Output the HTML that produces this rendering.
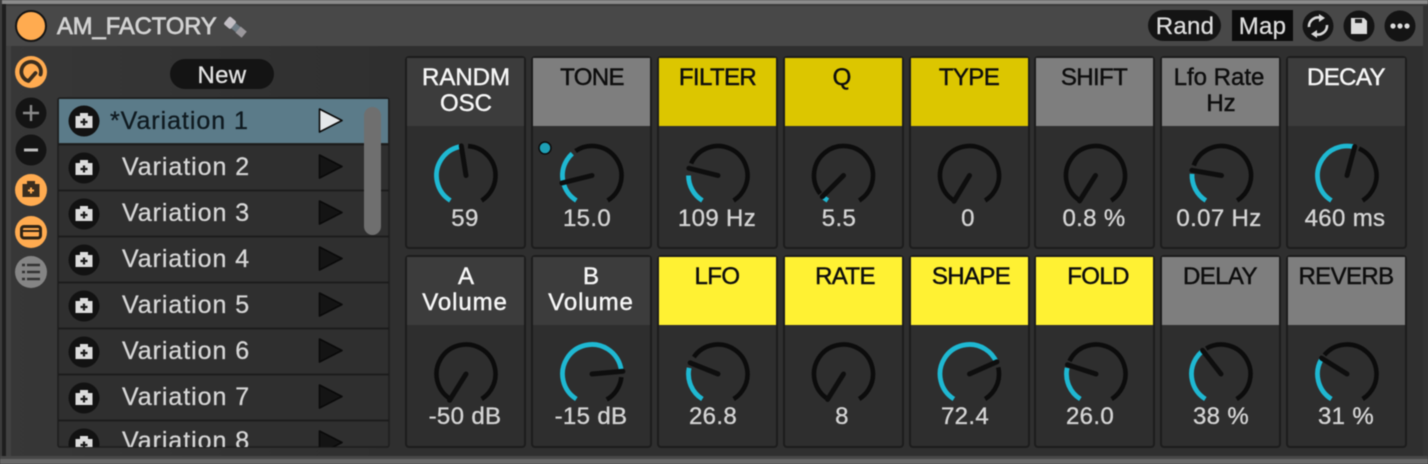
<!DOCTYPE html>
<html><head><meta charset="utf-8"><style>
html,body{margin:0;padding:0;width:1428px;height:464px;overflow:hidden;background:#3a3a3a}
svg{display:block;filter:blur(.45px)}
text{font-family:"Liberation Sans",sans-serif}
.l{font-size:24px;text-anchor:middle;stroke-width:.45px}
.w{fill:#f6f6f6;stroke:#f6f6f6}
.k{fill:#0e0e0e;stroke:#0e0e0e}
.t{letter-spacing:-.6px}
.m{letter-spacing:.9px}
.v{font-size:24px;text-anchor:middle;fill:#d4d4d4;stroke:#d4d4d4;stroke-width:.35px;letter-spacing:.35px}
.r{font-size:25px;fill:#d6d6d6;stroke:#d6d6d6;stroke-width:.3px;letter-spacing:.95px}
.bg{fill:none;stroke:#0c0c0c;stroke-width:4.600}
.c{fill:none;stroke:#1fb8d2;stroke-width:4.800}
.n{stroke:#0e0e0e;stroke-width:5;stroke-linecap:round}
</style></head><body>
<svg width="1428" height="464" viewBox="0 0 1428 464" xmlns="http://www.w3.org/2000/svg">
<defs>
<g id="cam"><circle r="15.500" fill="#121212"/><path d="M-8.500-5H-4V-8H4V-5H8.500V7H-8.500Z" fill="#dcdcdc"/><path d="M-3.500 1H3.500M0-2.500V4.500" stroke="#1a1a1a" stroke-width="2.200"/></g>
<clipPath id="lc"><rect x="58" y="98" width="332" height="349"/></clipPath>
<linearGradient id="bd" x1="0" x2="1" y1="0" y2="0"><stop offset="0" stop-color="#373737"/><stop offset=".28" stop-color="#2f2f2f"/><stop offset="1" stop-color="#2f2f2f"/></linearGradient>
</defs>
<rect width="1428" height="464" fill="#484848"/>
<rect width="1428" height="4" fill="#8b8b8b"/>
<rect y="4" width="1428" height="2" fill="#3a3a3a"/>
<rect x="0" y="0" width="2" height="464" fill="#3c3c3c"/>
<rect x="2" y="4" width="4" height="456" fill="#1e1e1e"/>
<rect x="1423" y="6" width="5" height="452" fill="#333"/>
<rect x="6" y="6" width="1417" height="40" fill="#484848"/>
<rect x="6" y="46" width="5" height="410" fill="#414141"/>
<rect x="11" y="46" width="1412" height="411" fill="url(#bd)"/>
<rect x="0" y="456" width="1428" height="3" fill="#474747"/>
<rect x="0" y="459" width="1428" height="5" fill="#686868"/>

<circle cx="31" cy="26" r="15" fill="#ffab50" stroke="#141414" stroke-width="2"/>
<text x="57" y="34" font-size="23.700px" fill="#d2d2d2" stroke="#d2d2d2" stroke-width=".75">AM_FACTORY</text>
<g transform="translate(235,27) rotate(40)"><rect x="-11" y="-5" width="9" height="10" rx="2" fill="#c2bec4"/><rect x="-2" y="-3.500" width="6" height="7" fill="#6f7c85"/><rect x="4" y="-4" width="8" height="8" fill="#9a979b"/></g>

<rect x="1148" y="10" width="73" height="31" rx="15.500" fill="#141414"/>
<text x="1185" y="34" font-size="24px" text-anchor="middle" fill="#dcdcdc" stroke="#dcdcdc" stroke-width=".3" letter-spacing=".3">Rand</text>
<rect x="1232" y="10" width="61" height="31" fill="#0c0c0c"/>
<text x="1262.500" y="34" font-size="24px" text-anchor="middle" fill="#dcdcdc" stroke="#dcdcdc" stroke-width=".3" letter-spacing=".3">Map</text>
<circle cx="1318" cy="26" r="15.500" fill="#141414"/>
<path d="M1309 27A9 9 0 0 1 1321 18M1327 25A9 9 0 0 1 1315 34" fill="none" stroke="#d8d8d8" stroke-width="2.600"/>
<path d="M1319 14L1325 18L1319 22ZM1317 30L1311 34L1317 38Z" fill="#d8d8d8"/>
<circle cx="1359" cy="26" r="15.500" fill="#141414"/>
<path d="M1351 18H1364L1367 21V34H1351Z" fill="#dcdcdc"/><rect x="1355" y="19" width="7" height="4" fill="#222"/>
<circle cx="1400" cy="26" r="15.500" fill="#141414"/>
<circle cx="1393" cy="26" r="2.600" fill="#dcdcdc"/><circle cx="1400" cy="26" r="2.600" fill="#dcdcdc"/><circle cx="1407" cy="26" r="2.600" fill="#dcdcdc"/>

<circle cx="31" cy="72" r="16" fill="#ffab50"/>
<path d="M40.500 74.500A9.800 9.800 0 1 0 28.500 81L35.500 73" fill="none" stroke="#3a2d1e" stroke-width="3.800" stroke-linecap="round" stroke-linejoin="round"/>
<circle cx="31" cy="113" r="15.500" fill="#141414"/><path d="M23 113H39M31 105V121" stroke="#8a8a8a" stroke-width="2.400"/>
<circle cx="31" cy="150" r="15.500" fill="#141414"/><path d="M24 150H38" stroke="#bdbdbd" stroke-width="3"/>
<circle cx="31" cy="190" r="16" fill="#ffab50"/><path d="M22.500 184H27V181H35V184H39.500V197H22.500Z" fill="#3a2d1e"/><path d="M28 190.500H34M31 187.500V193.500" stroke="#ffab50" stroke-width="2"/>
<circle cx="31" cy="232" r="16" fill="#ffab50"/><rect x="21.500" y="226.500" width="19" height="11.500" rx="2.500" fill="none" stroke="#2e2416" stroke-width="3"/><path d="M22 231H40" stroke="#2e2416" stroke-width="2"/>
<circle cx="31" cy="272" r="16" fill="#858585"/><path d="M27 265H40M27 272H40M27 279H40" stroke="#333" stroke-width="2.400"/><path d="M22 265H25M22 272H25M22 279H25" stroke="#333" stroke-width="2.400"/>

<rect x="170" y="59" width="104" height="30" rx="15" fill="#141414"/>
<text x="222" y="83" font-size="24px" text-anchor="middle" fill="#e2e2e2" stroke="#e2e2e2" stroke-width=".3" letter-spacing=".3">New</text>

<rect x="58" y="98" width="331" height="349" rx="2" fill="#2f2f2f" stroke="#1d1d1d" stroke-width="1.500"/>
<g clip-path="url(#lc)">
<rect x="59" y="99" width="329" height="44" fill="#5b7b89"/>
<path d="M58 144.500H389M58 190.500H389M58 236.500H389M58 282.500H389M58 328.500H389M58 374.500H389M58 420.500H389" stroke="#1c1c1c" stroke-width="2"/>
<use href="#cam" x="84" y="121"/><use href="#cam" x="84" y="168"/><use href="#cam" x="84" y="214"/><use href="#cam" x="84" y="260"/><use href="#cam" x="84" y="306"/><use href="#cam" x="84" y="352"/><use href="#cam" x="84" y="398"/><use href="#cam" x="84" y="444"/>
<text x="110" y="129" font-size="25px" fill="#0f1a20" stroke="#0f1a20" stroke-width=".3" letter-spacing=".95">*Variation 1</text>
<text x="122" y="175" class="r">Variation 2</text>
<text x="122" y="221" class="r">Variation 3</text>
<text x="122" y="267" class="r">Variation 4</text>
<text x="122" y="313" class="r">Variation 5</text>
<text x="122" y="359" class="r">Variation 6</text>
<text x="122" y="405" class="r">Variation 7</text>
<text x="122" y="449" class="r">Variation 8</text>
<path d="M319.500 109L342 120.500L319.500 132Z" fill="#e4e7e9" stroke="#0a0a0a" stroke-width="1.600" stroke-linejoin="round"/>
<g fill="#141414" stroke="#0a0a0a" stroke-width="1.600" stroke-linejoin="round"><path d="M319.500 155L342 166.500L319.500 178Z"/><path d="M319.500 201L342 212.500L319.500 224Z"/><path d="M319.500 247L342 258.500L319.500 270Z"/><path d="M319.500 293L342 304.500L319.500 316Z"/><path d="M319.500 339L342 350.500L319.500 362Z"/><path d="M319.500 385L342 396.500L319.500 408Z"/><path d="M319.500 431L342 442.500L319.500 454Z"/></g>
<rect x="364" y="107" width="17" height="128" rx="8.500" fill="#6f6f6f"/>
</g>

<g stroke="#1c1c1c" stroke-width="2" fill="#2e2e2e">
<rect x="406" y="57" width="119" height="191" rx="3"/><rect x="532" y="57" width="119" height="191" rx="3"/><rect x="658" y="57" width="119" height="191" rx="3"/><rect x="784" y="57" width="119" height="191" rx="3"/><rect x="910" y="57" width="119" height="191" rx="3"/><rect x="1035" y="57" width="119" height="191" rx="3"/><rect x="1161" y="57" width="119" height="191" rx="3"/><rect x="1287" y="57" width="119" height="191" rx="3"/>
<rect x="406" y="256" width="119" height="191" rx="3"/><rect x="532" y="256" width="119" height="191" rx="3"/><rect x="658" y="256" width="119" height="191" rx="3"/><rect x="784" y="256" width="119" height="191" rx="3"/><rect x="910" y="256" width="119" height="191" rx="3"/><rect x="1035" y="256" width="119" height="191" rx="3"/><rect x="1161" y="256" width="119" height="191" rx="3"/><rect x="1287" y="256" width="119" height="191" rx="3"/>
</g>
<rect x="407" y="58" width="117" height="68" fill="#3c3c3c"/><rect x="533" y="58" width="117" height="68" fill="#7e7e7e"/><rect x="659" y="58" width="117" height="68" fill="#dcc600"/><rect x="785" y="58" width="117" height="68" fill="#dcc600"/><rect x="911" y="58" width="117" height="68" fill="#dcc600"/><rect x="1036" y="58" width="117" height="68" fill="#7e7e7e"/><rect x="1162" y="58" width="117" height="68" fill="#7e7e7e"/><rect x="1288" y="58" width="117" height="68" fill="#3c3c3c"/>
<rect x="407" y="257" width="117" height="68" fill="#3c3c3c"/><rect x="533" y="257" width="117" height="68" fill="#3c3c3c"/><rect x="659" y="257" width="117" height="68" fill="#fff133"/><rect x="785" y="257" width="117" height="68" fill="#fff133"/><rect x="911" y="257" width="117" height="68" fill="#fff133"/><rect x="1036" y="257" width="117" height="68" fill="#fff133"/><rect x="1162" y="257" width="117" height="68" fill="#7e7e7e"/><rect x="1288" y="257" width="117" height="68" fill="#7e7e7e"/>

<text class="l w" x="466" y="85">RANDM</text><text class="l w" x="466" y="111">OSC</text>
<text class="l k t" x="592" y="85">TONE</text><text class="l k t" x="717.500" y="85">FILTER</text><text class="l k" x="842" y="85">Q</text><text class="l k t" x="969" y="85">TYPE</text><text class="l k t" x="1094" y="85">SHIFT</text>
<text class="l k" x="1219" y="85">Lfo Rate</text><text class="l k" x="1221" y="111">Hz</text><text class="l w t" x="1346" y="85">DECAY</text>
<text class="l w" x="466" y="284">A</text><text class="l w m" x="465" y="310">Volume</text><text class="l w" x="591" y="284">B</text><text class="l w m" x="591" y="310">Volume</text>
<text class="l k t" x="717" y="284">LFO</text><text class="l k t" x="845" y="284">RATE</text><text class="l k t" x="971" y="284">SHAPE</text><text class="l k t" x="1098" y="284">FOLD</text><text class="l k t" x="1220" y="284">DELAY</text><text class="l k t" x="1346" y="284">REVERB</text>

<text class="v" x="465" y="226">59</text><text class="v" x="587" y="226">15.0</text><text class="v" x="717" y="226">109 Hz</text><text class="v" x="839" y="226">5.5</text><text class="v" x="968" y="226">0</text><text class="v" x="1094" y="226">0.8 %</text><text class="v" x="1219" y="226">0.07 Hz</text><text class="v" x="1345" y="226">460 ms</text>
<text class="v" x="465" y="424">-50 dB</text><text class="v" x="591" y="424">-15 dB</text><text class="v" x="713" y="424">26.8</text><text class="v" x="842" y="424">8</text><text class="v" x="965" y="424">72.4</text><text class="v" x="1090" y="424">26.0</text><text class="v" x="1221" y="424">38 %</text><text class="v" x="1346" y="424">31 %</text>

<circle cx="545" cy="148" r="6" fill="#1e9fb5" stroke="#0c0c0c" stroke-width="1.500"/>

<g transform="translate(466,175.500)"><circle r="29.500" class="bg" pathLength="360" stroke-dasharray="144 360" transform="rotate(-86)"/><circle r="29.500" class="c" pathLength="360" stroke-dasharray="135 360" transform="rotate(-238)"/><line y2="-30" class="n" transform="rotate(-9)"/></g>
<g transform="translate(592,175.500)"><circle r="29.500" class="bg" pathLength="360" stroke-dasharray="182 360" transform="rotate(-124)"/><circle r="29.500" class="c" pathLength="360" stroke-dasharray="106 360" transform="rotate(-238)"/><line y2="-31" class="n" transform="rotate(-104)"/></g>
<g transform="translate(718,175.500)"><circle r="29.500" class="bg" pathLength="360" stroke-dasharray="214 360" transform="rotate(-156)"/><circle r="29.500" class="c" pathLength="360" stroke-dasharray="58 360" transform="rotate(-238)"/><line y2="-30" class="n" transform="rotate(-76)"/></g>
<g transform="translate(843.500,175.500)"><circle r="29.500" class="bg" pathLength="360" stroke-dasharray="276 360" transform="rotate(-218)"/><circle r="29.500" class="c" pathLength="360" stroke-dasharray="12 360" transform="rotate(-238)"/><line y2="-30" class="n" transform="rotate(-135)"/></g>
<g transform="translate(969.500,175.500)"><circle r="29.500" class="bg" pathLength="360" stroke-dasharray="296 360" transform="rotate(-238)"/><line y2="-30" class="n" transform="rotate(-149)"/></g>
<g transform="translate(1095.500,175.500)"><circle r="29.500" class="bg" pathLength="360" stroke-dasharray="296 360" transform="rotate(-238)"/><line y2="-30" class="n" transform="rotate(-148)"/></g>
<g transform="translate(1221.500,175.500)"><circle r="29.500" class="bg" pathLength="360" stroke-dasharray="218 360" transform="rotate(-160)"/><circle r="29.500" class="c" pathLength="360" stroke-dasharray="61 360" transform="rotate(-238)"/><line y2="-30" class="n" transform="rotate(-80)"/></g>
<g transform="translate(1347,175.500)"><circle r="29.500" class="bg" pathLength="360" stroke-dasharray="124 360" transform="rotate(-66)"/><circle r="29.500" class="c" pathLength="360" stroke-dasharray="160 360" transform="rotate(-238)"/><line y2="-30" class="n" transform="rotate(15)"/></g>

<g transform="translate(466,374)"><circle r="29.500" class="bg" pathLength="360" stroke-dasharray="296 360" transform="rotate(-238)"/><line y2="-31" class="n" transform="rotate(-148)"/></g>
<g transform="translate(592,374)"><circle r="29.500" class="bg" pathLength="360" stroke-dasharray="54 360" transform="rotate(6)"/><circle r="29.500" class="c" pathLength="360" stroke-dasharray="232 360" transform="rotate(-238)"/><line y2="-31" class="n" transform="rotate(85)"/></g>
<g transform="translate(718,374)"><circle r="29.500" class="bg" pathLength="360" stroke-dasharray="203 360" transform="rotate(-145)"/><circle r="29.500" class="c" pathLength="360" stroke-dasharray="70 360" transform="rotate(-238)"/><line y2="-30" class="n" transform="rotate(-68)"/></g>
<g transform="translate(843.500,374)"><circle r="29.500" class="bg" pathLength="360" stroke-dasharray="296 360" transform="rotate(-238)"/><line y2="-30" class="n" transform="rotate(-148)"/></g>
<g transform="translate(969.500,374)"><circle r="29.500" class="bg" pathLength="360" stroke-dasharray="71 360" transform="rotate(-13)"/><circle r="29.500" class="c" pathLength="360" stroke-dasharray="214 360" transform="rotate(-238)"/><line y2="-30" class="n" transform="rotate(66)"/></g>
<g transform="translate(1096,374)"><circle r="29.500" class="bg" pathLength="360" stroke-dasharray="212 360" transform="rotate(-154)"/><circle r="29.500" class="c" pathLength="360" stroke-dasharray="70 360" transform="rotate(-238)"/><line y2="-30" class="n" transform="rotate(-72)"/></g>
<g transform="translate(1221,374)"><circle r="29.500" class="bg" pathLength="360" stroke-dasharray="178 360" transform="rotate(-120)"/><circle r="29.500" class="c" pathLength="360" stroke-dasharray="108 360" transform="rotate(-238)"/><line y2="-30" class="n" transform="rotate(-38)"/></g>
<g transform="translate(1347,374)"><circle r="29.500" class="bg" pathLength="360" stroke-dasharray="198 360" transform="rotate(-140)"/><circle r="29.500" class="c" pathLength="360" stroke-dasharray="88 360" transform="rotate(-238)"/><line y2="-30" class="n" transform="rotate(-58)"/></g>
</svg>
</body></html>
